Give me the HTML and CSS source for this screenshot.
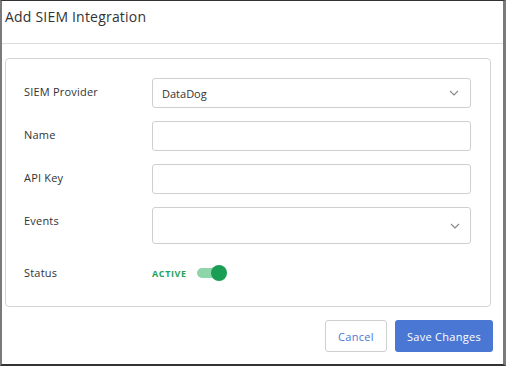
FILE: index.html
```html
<!DOCTYPE html>
<html lang="en">
<head>
    <meta charset="UTF-8">
    <meta name="viewport" content="width=device-width, initial-scale=1.0">
    <title>Add SIEM Integration</title>
    <link rel="stylesheet" href="styles.css">
</head>
<body>
    <div class="modal">
        <div class="modal-header">
            <h1>Add SIEM Integration</h1>
        </div>

        <div class="modal-body">
            <div class="form-card">
                <label class="field-label">SIEM Provider</label>
                <div class="select-box">
                    <span>DataDog</span>
                    <svg class="chevron" width="10" height="6" viewBox="0 0 10 6"><path d="M1 1l4 4 4-4" fill="none" stroke="#888" stroke-width="1.1"/></svg>
                </div>

                <label class="field-label">Name</label>
                <input type="text" class="text-input">

                <label class="field-label">API Key</label>
                <input type="text" class="text-input">

                <label class="field-label">Events</label>
                <div class="select-box tall">
                    <span></span>
                    <svg class="chevron" width="10" height="6" viewBox="0 0 10 6"><path d="M1 1l4 4 4-4" fill="none" stroke="#888" stroke-width="1.1"/></svg>
                </div>

                <label class="field-label status-label">Status</label>
                <div class="status">
                    <span class="status-text">ACTIVE</span>
                    <span class="toggle"><span class="knob"></span></span>
                </div>
            </div>
        </div>

        <div class="modal-footer">
            <button class="btn btn-cancel">Cancel</button>
            <button class="btn btn-save">Save Changes</button>
        </div>
    </div>
</body>
</html>
```

FILE: styles.css
```css
* {
    box-sizing: border-box;
}
body {
    margin: 0;
    font-family: "Open Sans", "Liberation Sans", sans-serif;
    color: #333;
    background: #fff;
}
.modal {
    width: 506px;
    height: 366px;
    border-top: 1px solid #333;
    border-left: 2px solid #7a7a7a;
    border-right: 3px solid #7a7a7a;
    border-bottom: 2px solid #333;
    background: #fff;
}
.modal-header {
    height: 43px;
    border-bottom: 1px solid #dcdcdc;
    padding: 6px 3px 0;
}
.modal-header h1 {
    margin: 0;
    font-size: 14px;
    font-weight: 400;
    color: #333;
    letter-spacing: 0.2px;
}
.modal-body {
    padding: 14px 12px 0 3px;
}
.form-card {
    display: grid;
    grid-template-columns: 128px 1fr;
    grid-template-rows: 30px 30px 30px 37px 18px;
    row-gap: 13px;
    align-items: start;
    border: 1px solid #d4d4d4;
    border-radius: 4px;
    padding: 19px 19px 24px 18px;
    height: 249px;
}
.field-label {
    font-size: 11px;
    line-height: 28px;
    color: #333;
    letter-spacing: 0.2px;
}
.status-label {
    line-height: 18px;
    margin-top: 7px;
}
.text-input,
.select-box {
    height: 30px;
    width: 100%;
    border: 1px solid #cfcfcf;
    border-radius: 3px;
    background: #fff;
    font-family: inherit;
    font-size: 11px;
}
.select-box {
    display: flex;
    align-items: center;
    justify-content: space-between;
    padding: 0 11px 0 9px;
    color: #333;
}
.select-box.tall {
    height: 37px;
    padding-right: 10px;
}
.chevron {
    display: block;
}
.status {
    display: flex;
    align-items: center;
    gap: 10px;
    height: 18px;
    margin-top: 7px;
}
.status-text {
    font-size: 9px;
    font-weight: 700;
    color: #1fa35c;
    letter-spacing: 0.6px;
}
.toggle {
    position: relative;
    width: 26px;
    height: 10px;
    border-radius: 5px;
    background: #8fd5aa;
}
.knob {
    position: absolute;
    right: -4px;
    top: -3px;
    width: 16px;
    height: 16px;
    border-radius: 50%;
    background: #1a9d55;
}
.modal-footer {
    display: flex;
    justify-content: flex-end;
    gap: 8px;
    padding: 13px 10px 0 0;
}
.btn {
    height: 32px;
    border-radius: 3px;
    font-family: inherit;
    font-size: 11px;
    letter-spacing: 0.3px;
    cursor: pointer;
}
.btn-cancel {
    width: 62px;
    background: #fff;
    border: 1px solid #cfcfcf;
    color: #4a78d6;
}
.btn-save {
    width: 98px;
    background: #4a77d4;
    border: none;
    color: #fff;
}
```
